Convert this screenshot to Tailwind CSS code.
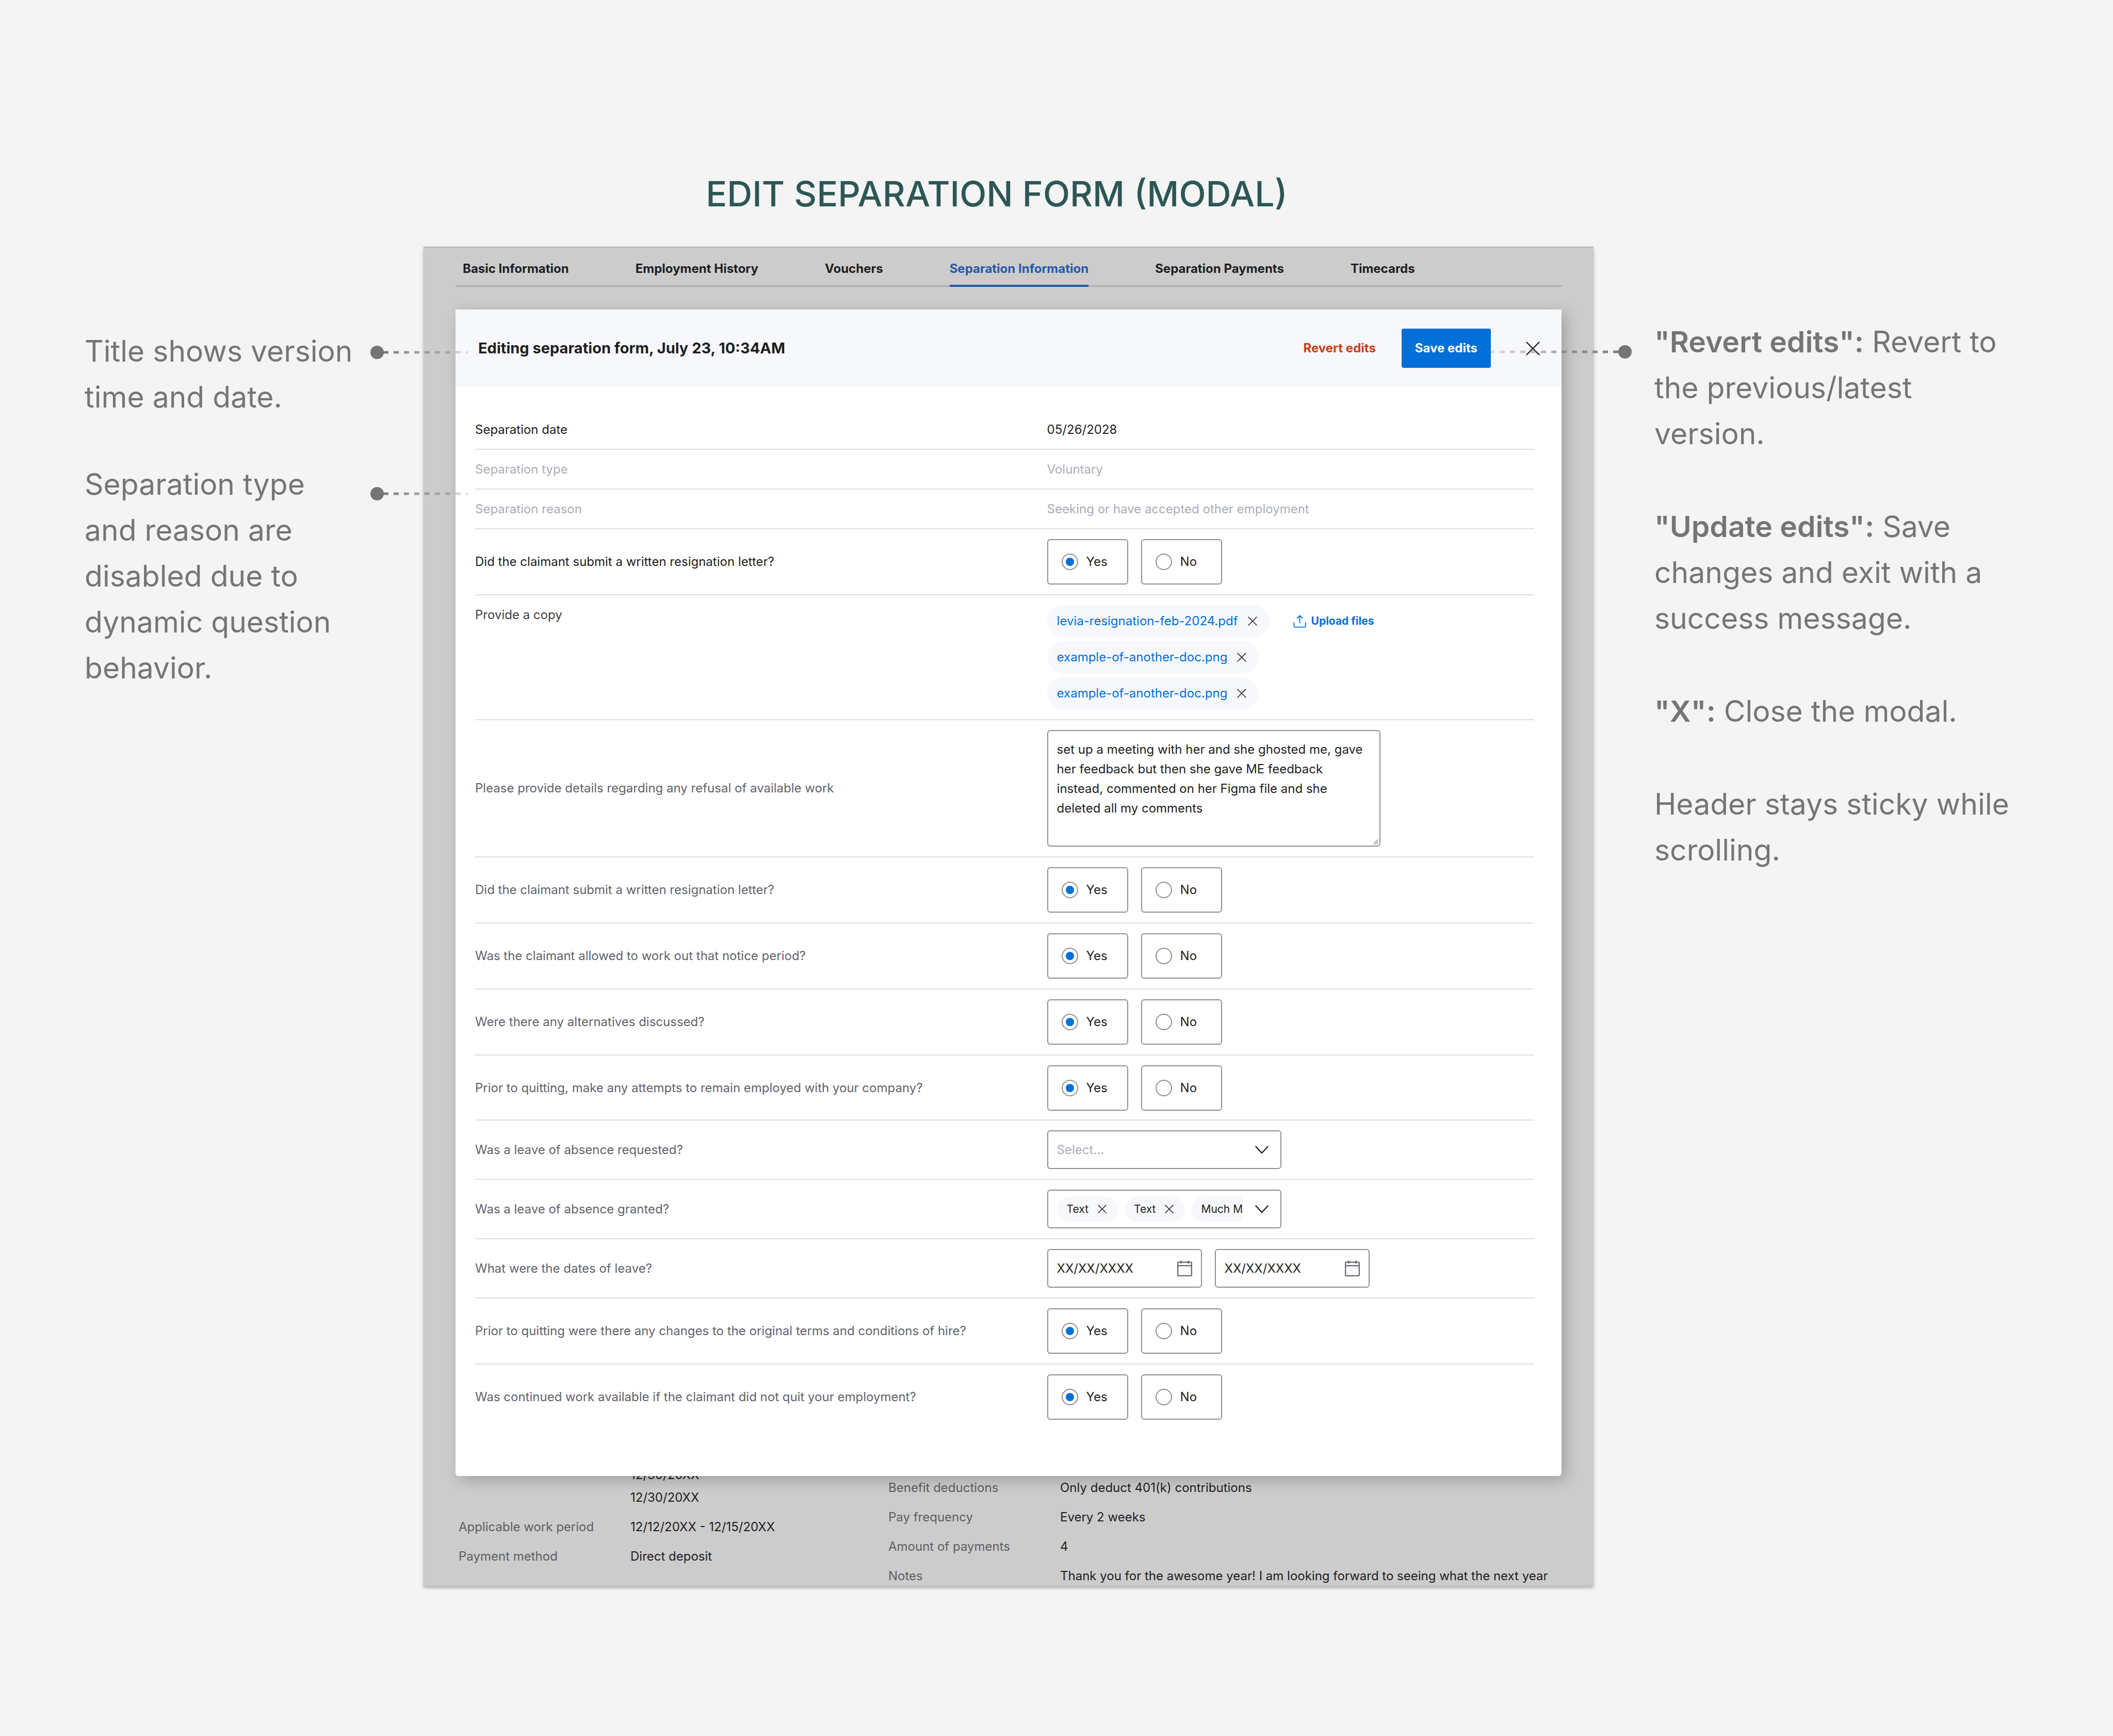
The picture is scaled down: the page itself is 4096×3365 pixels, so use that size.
<!DOCTYPE html>
<html lang="en">
<head>
<meta charset="utf-8">
<meta name="viewport" content="width=device-width, initial-scale=1">
<title>Edit separation form (modal)</title>
<script src="https://cdn.jsdelivr.net/npm/@tailwindcss/browser@4"></script>
</head>
<body class="bg-[#f4f4f4] font-['Inter',sans-serif] text-[24px] leading-[38px] text-[#1d1e20]">

<!-- Shared icons -->
<svg class="hidden" aria-hidden="true">
  <symbol id="x" viewBox="0 0 18 18"><path d="M1 1 17 17M17 1 1 17" fill="none" stroke="currentColor" stroke-width="1.6" stroke-linecap="round"/></symbol>
  <symbol id="chevron" viewBox="0 0 26 16"><path d="M1.5 1.5 13 14 24.5 1.5" fill="none" stroke="currentColor" stroke-width="2.4" stroke-linecap="round" stroke-linejoin="round"/></symbol>
  <symbol id="calendar" viewBox="0 0 29 31"><g fill="none" stroke="currentColor" stroke-width="2.2"><rect x="1.2" y="3.6" width="26.6" height="26.2" rx="1.2"/><path d="M1.2 10.4H27.8M7.4 .4V6.6M21.6 .4V6.6"/></g></symbol>
  <symbol id="upload" viewBox="0 0 100 100"><g fill="none" stroke="currentColor" stroke-width="7" stroke-linecap="round" stroke-linejoin="round"><path d="M5 58V87Q5 94 12 94H88Q95 94 95 87V58"/><path d="M50 6V62M29 25 50 5 71 25"/></g></symbol>
</svg>

<main class="grid min-h-screen grid-cols-[821fr_2268fr_1007fr] pt-[333px] pb-[120px]">

  <!-- Notes on the left -->
  <aside class="flex flex-col gap-[80px] pt-[303px] pl-[164px] text-[57px] leading-[89px] whitespace-nowrap text-[#757575]">
    <p>Title shows version<br>time and date.</p>
    <p>Separation type<br>and reason are<br>disabled due to<br>dynamic question<br>behavior.</p>
  </aside>

  <section class="relative">
    <h1 class="pr-[46px] text-center text-[68px] leading-[84px] font-medium text-[#2c5755]">EDIT SEPARATION FORM (MODAL)</h1>

    <div class="relative mt-[61px] border-t-2 border-[#b7b7b7] bg-[#cccccc] px-[62px] shadow-[0_4px_6px_rgba(0,0,0,0.28)]">
      <nav class="-mt-[2px] flex h-[78px] gap-[129px] border-b-[3px] border-[#adadb1] pl-[14px] font-bold" aria-label="Claimant sections">
        <a href="#" class="-mb-[3px] border-b-[4px] border-transparent pt-[24px]">Basic Information</a>
        <a href="#" class="-mb-[3px] border-b-[4px] border-transparent pt-[24px]">Employment History</a>
        <a href="#" class="-mb-[3px] border-b-[4px] border-transparent pt-[24px]">Vouchers</a>
        <a href="#" class="-mb-[3px] border-b-[4px] border-[#2459a9] pt-[24px] text-[#2459a9]" aria-current="page">Separation Information</a>
        <a href="#" class="-mb-[3px] border-b-[4px] border-transparent pt-[24px]">Separation Payments</a>
        <a href="#" class="-mb-[3px] border-b-[4px] border-transparent pt-[24px]">Timecards</a>
      </nav>

      <form role="dialog" aria-labelledby="dialog-title" class="relative z-10 mt-[44px] rounded-b-[6px] bg-white pb-[88px] shadow-[8px_8px_28px_rgba(0,0,0,0.22)]">
        <header class="mb-[45px] flex h-[150px] items-center bg-[#f7f8fc] pr-[42px] pl-[44px]">
          <h2 id="dialog-title" class="text-[29px] font-bold">Editing separation form, July 23, 10:34AM</h2>
          <button type="button" class="ml-auto font-bold text-[#cb3d17]">Revert edits</button>
          <button type="submit" class="ml-[50px] h-[76px] rounded-[4px] bg-[#0070d8] px-[26px] font-bold text-white">Save edits</button>
          <button type="button" aria-label="Close" class="ml-[68px]"><svg class="size-[27px]"><use href="#x"/></svg></button>
        </header>

        <div class="mr-[53px] ml-[38px]">
          <div class="grid grid-cols-[54fr_46fr] items-center border-b-2 border-[#dcdfe4] pt-[19px] pb-[18px]"><span>Separation date</span><span>05/26/2028</span></div>
          <div class="grid grid-cols-[54fr_46fr] items-center border-b-2 border-[#dcdfe4] pt-[19px] pb-[18px] text-[#a9aeb7]"><span>Separation type</span><span>Voluntary</span></div>
          <div class="grid grid-cols-[54fr_46fr] items-center border-b-2 border-[#dcdfe4] pt-[19px] pb-[18px] text-[#a9aeb7]"><span>Separation reason</span><span>Seeking or have accepted other employment</span></div>

          <div class="grid grid-cols-[54fr_46fr] items-center border-b-2 border-[#dcdfe4] py-[19px]" data-radio="Did the claimant submit a written resignation letter?"></div>

          <div class="grid grid-cols-[54fr_46fr] items-start border-b-2 border-[#dcdfe4] py-[19px]">
            <span class="text-[#3d4046]">Provide a copy</span>
            <div class="flex items-start gap-[46px]">
              <ul class="flex flex-col items-start gap-[8px] text-[#0070d8]">
                <li class="flex h-[62px] items-center gap-[19px] rounded-full bg-[#f7f8fc] pr-[24px] pl-[19px]"><a href="#">levia-resignation-feb-2024.pdf</a><button type="button" aria-label="Remove file" class="text-[#1d1e20]"><svg class="size-[18px]"><use href="#x"/></svg></button></li>
                <li class="flex h-[62px] items-center gap-[19px] rounded-full bg-[#f7f8fc] pr-[24px] pl-[19px]"><a href="#">example-of-another-doc.png</a><button type="button" aria-label="Remove file" class="text-[#1d1e20]"><svg class="size-[18px]"><use href="#x"/></svg></button></li>
                <li class="flex h-[62px] items-center gap-[19px] rounded-full bg-[#f7f8fc] pr-[24px] pl-[19px]"><a href="#">example-of-another-doc.png</a><button type="button" aria-label="Remove file" class="text-[#1d1e20]"><svg class="size-[18px]"><use href="#x"/></svg></button></li>
              </ul>
              <button type="button" class="flex h-[62px] items-center gap-[10px] text-[21px] font-bold text-[#0070d8]"><svg class="size-[25px]"><use href="#upload"/></svg>Upload files</button>
            </div>
          </div>

          <div class="grid grid-cols-[54fr_46fr] items-center border-b-2 border-[#dcdfe4] py-[19px]">
            <label for="refusal" class="text-[#5f636b]">Please provide details regarding any refusal of available work</label>
            <div class="relative h-[226px] w-[646px]">
              <textarea id="refusal" class="block h-full w-full resize-none overflow-hidden rounded-[6px] border-2 border-[#8b8f98] bg-white px-[17px] py-[17px]">set up a meeting with her and she ghosted me, gave
her feedback but then she gave ME feedback
instead, commented on her Figma file and she
deleted all my comments</textarea>
              <svg class="absolute right-[4px] bottom-[4px] size-[11px]" viewBox="0 0 11 11" fill="none" stroke="#55585e" stroke-width="1"><path d="M.5 10.5 10.5.5M3.5 10.5 10.5 3.5M6.5 10.5 10.5 6.5M9 10.5 10.5 9"/></svg>
            </div>
          </div>

          <div class="grid grid-cols-[54fr_46fr] items-center border-b-2 border-[#dcdfe4] py-[19px] text-[#5f636b]" data-radio="Did the claimant submit a written resignation letter?"></div>
          <div class="grid grid-cols-[54fr_46fr] items-center border-b-2 border-[#dcdfe4] py-[19px] text-[#5f636b]" data-radio="Was the claimant allowed to work out that notice period?"></div>
          <div class="grid grid-cols-[54fr_46fr] items-center border-b-2 border-[#dcdfe4] py-[19px] text-[#5f636b]" data-radio="Were there any alternatives discussed?"></div>
          <div class="grid grid-cols-[54fr_46fr] items-center border-b-2 border-[#dcdfe4] pt-[19px] pb-[17px] text-[#5f636b]" data-radio="Prior to quitting, make any attempts to remain employed with your company?"></div>

          <div class="grid grid-cols-[54fr_46fr] items-center border-b-2 border-[#dcdfe4] py-[19px]">
            <label for="requested" class="text-[#5f636b]">Was a leave of absence requested?</label>
            <div class="relative w-[454px]">
              <select id="requested" class="block h-[75px] w-full appearance-none rounded-[6px] border-2 border-[#8b8f98] bg-white px-[17px] text-[#a9aeb7]"><option>Select...</option></select>
              <svg class="pointer-events-none absolute top-[30px] right-[25px] h-[16px] w-[26px]"><use href="#chevron"/></svg>
            </div>
          </div>

          <div class="grid grid-cols-[54fr_46fr] items-center border-b-2 border-[#dcdfe4] py-[19px]">
            <span id="granted" class="text-[#5f636b]">Was a leave of absence granted?</span>
            <div role="group" aria-labelledby="granted" class="flex h-[75px] w-[454px] items-center justify-between rounded-[6px] border-2 border-[#8b8f98] bg-white pr-[23px] pl-[17px]">
              <ul class="flex w-[360px] gap-[12px] text-[21px] whitespace-nowrap">
                <li class="flex h-[50px] shrink-0 items-center gap-[18px] rounded-full bg-[#f7f8fc] pr-[22px] pl-[19px]">Text<button type="button" aria-label="Remove"><svg class="size-[17px]"><use href="#x"/></svg></button></li>
                <li class="flex h-[50px] shrink-0 items-center gap-[18px] rounded-full bg-[#f7f8fc] pr-[22px] pl-[19px]">Text<button type="button" aria-label="Remove"><svg class="size-[17px]"><use href="#x"/></svg></button></li>
                <li class="flex h-[50px] flex-1 items-center rounded-l-full bg-[#f7f8fc] pl-[19px]">Much M</li>
              </ul>
              <button type="button" aria-label="Open list"><svg class="h-[16px] w-[26px]"><use href="#chevron"/></svg></button>
            </div>
          </div>

          <div class="grid grid-cols-[54fr_46fr] items-center border-b-2 border-[#dcdfe4] py-[19px]">
            <label for="from" class="text-[#5f636b]">What were the dates of leave?</label>
            <div class="flex gap-[25px]">
              <div class="flex h-[75px] w-[300px] items-center rounded-[6px] border-2 border-[#8b8f98] bg-white px-[17px]">
                <input id="from" value="XX/XX/XXXX" class="min-w-0 flex-1 bg-transparent">
                <svg class="h-[31px] w-[29px] text-[#5f636b]"><use href="#calendar"/></svg>
              </div>
              <div class="flex h-[75px] w-[300px] items-center rounded-[6px] border-2 border-[#8b8f98] bg-white px-[17px]">
                <input aria-label="End of leave" value="XX/XX/XXXX" class="min-w-0 flex-1 bg-transparent">
                <svg class="h-[31px] w-[29px] text-[#5f636b]"><use href="#calendar"/></svg>
              </div>
            </div>
          </div>

          <div class="grid grid-cols-[54fr_46fr] items-center border-b-2 border-[#dcdfe4] py-[19px] text-[#5f636b]" data-radio="Prior to quitting were there any changes to the original terms and conditions of hire?"></div>
          <div class="grid grid-cols-[54fr_46fr] items-center pt-[19px] pb-[21px] text-[#5f636b]" data-radio="Was continued work available if the claimant did not quit your employment?"></div>
        </div>
      </form>

      <!-- Page content behind the dialog -->
      <div class="-mt-[21px] grid grid-cols-[833fr_1305fr] pl-[6px]">
        <dl class="grid grid-cols-[333px_1fr] content-start gap-y-[19px]">
          <dt></dt><dd class="flex flex-col gap-[6px]"><span>12/30/20XX</span><span>12/30/20XX</span></dd>
          <dt class="text-[#5c5e62]">Applicable work period</dt><dd>12/12/20XX - 12/15/20XX</dd>
          <dt class="text-[#5c5e62]">Payment method</dt><dd>Direct deposit</dd>
        </dl>
        <dl class="grid grid-cols-[333px_1fr] content-start gap-y-[19px] pt-[25px]">
          <dt class="text-[#5c5e62]">Benefit deductions</dt><dd>Only deduct 401(k) contributions</dd>
          <dt class="text-[#5c5e62]">Pay frequency</dt><dd>Every 2 weeks</dd>
          <dt class="text-[#5c5e62]">Amount of payments</dt><dd>4</dd>
          <dt class="text-[#5c5e62]">Notes</dt><dd>Thank you for the awesome year! I am looking forward to seeing what the next year</dd>
        </dl>
      </div>

      <!-- Connectors from the notes to the dialog -->
      <svg class="absolute top-[189px] -left-[104px] z-20 h-[28px] w-[190px]" viewBox="0 0 190 28" aria-hidden="true">
        <defs><linearGradient id="fade" gradientUnits="userSpaceOnUse" x1="14" y1="0" x2="190" y2="0"><stop offset="0" stop-color="#757575"/><stop offset="1" stop-color="#757575" stop-opacity=".2"/></linearGradient></defs>
        <circle cx="14" cy="14" r="13" fill="#757575"/><path d="M26 14H190" stroke="url(#fade)" stroke-width="5" stroke-dasharray="10 10"/>
      </svg>
      <svg class="absolute top-[463px] -left-[104px] z-20 h-[28px] w-[190px]" viewBox="0 0 190 28" aria-hidden="true">
        <circle cx="14" cy="14" r="13" fill="#757575"/><path d="M26 14H190" stroke="url(#fade)" stroke-width="5" stroke-dasharray="10 10"/>
      </svg>
      <svg class="absolute top-[188px] -right-[75px] z-20 h-[28px] w-[274px]" viewBox="0 0 274 28" aria-hidden="true">
        <defs><linearGradient id="fade-left" gradientUnits="userSpaceOnUse" x1="260" y1="0" x2="0" y2="0"><stop offset="0" stop-color="#757575"/><stop offset="1" stop-color="#757575" stop-opacity=".2"/></linearGradient></defs>
        <circle cx="260" cy="14" r="13" fill="#757575"/><path d="M247 14H0" stroke="url(#fade-left)" stroke-width="5" stroke-dasharray="10 10"/>
      </svg>
    </div>
  </section>

  <!-- Notes on the right -->
  <aside class="flex flex-col gap-[91px] pt-[285px] pl-[118px] text-[57px] leading-[89px] whitespace-nowrap text-[#757575]">
    <p><b class="font-semibold">"Revert edits":</b> Revert to<br>the previous/latest<br>version.</p>
    <p><b class="font-semibold">"Update edits":</b> Save<br>changes and exit with a<br>success message.</p>
    <p><b class="font-semibold">"X":</b> Close the modal.</p>
    <p>Header stays sticky while<br>scrolling.</p>
  </aside>
</main>

<script>
  // Fill each yes/no question row with its label and radio pair.
  document.querySelectorAll('[data-radio]').forEach((row, i) => {
    const option = (text, on) => `<label class="flex h-[88px] w-[157px] items-center gap-[16px] rounded-[6px] border-2 border-[#8b8f98] bg-white pl-[26px]"><input type="radio" name="q${i}" ${on ? 'checked' : ''} class="grid size-[32px] shrink-0 appearance-none place-items-center rounded-full border-2 border-[#8b8f98] before:hidden before:size-[16px] before:rounded-full before:bg-[#0070d8] before:content-[''] checked:before:block">${text}</label>`;
    row.innerHTML = `<span id="q${i}">${row.dataset.radio}</span><div role="radiogroup" aria-labelledby="q${i}" class="flex gap-[25px] text-[#1d1e20]">${option('Yes', true)}${option('No', false)}</div>`;
  });
</script>
</body>
</html>
